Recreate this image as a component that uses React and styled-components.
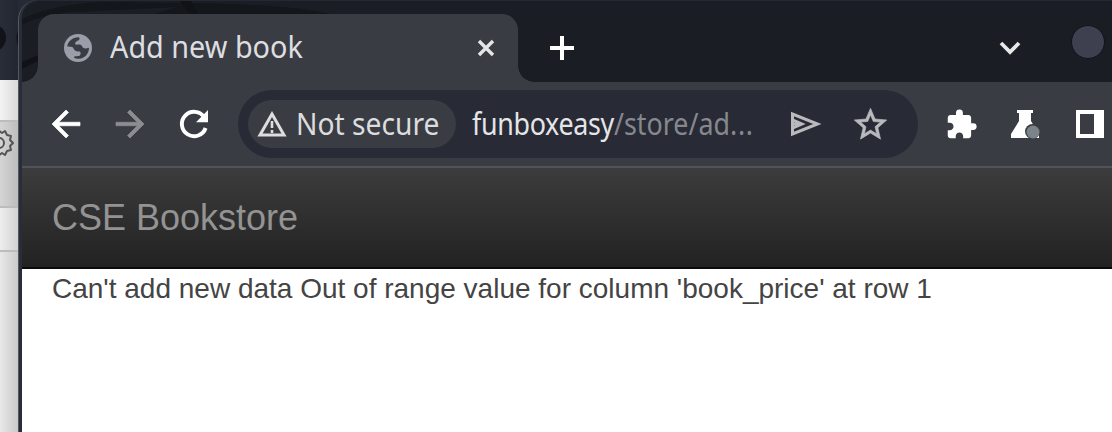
import React from "react";
import styled, { createGlobalStyle } from "styled-components";
import { MdArrowBack, MdArrowForward, MdStarBorder, MdExtension } from "react-icons/md";

const Global = createGlobalStyle`
  * { box-sizing: border-box; }
  body { margin: 0; overflow: hidden; background: #fff; }
  svg { display: block; flex: none; }
  svg path[fill="none"]:not([stroke]) { stroke: none; }
`;
const Desktop = styled.div`
  display: flex; width: 1112px; height: 432px; overflow: hidden;
  background: linear-gradient(#252a34 80px, #f4f4f4 80px);
`;
const BackWindow = styled.aside`
  width: 18px; flex: none; display: flex; flex-direction: column;
`;
const BackTitle = styled.div`
  height: 80px; padding-top: 23px;
  background: linear-gradient(90deg, #292d39, #22262f);
`;
const BackPane = styled.div`
  height: ${p => p.$h}px;
  border-top: ${p => (p.$line ? "2px solid #b9bebc" : "0")};
  background: linear-gradient(90deg, ${p => p.$from}, ${p => p.$to});
  padding-top: ${p => p.$pad || 0}px;
`;
const Frame = styled.div`
  flex: 1; min-width: 0; display: flex; flex-direction: column;
  border-left: 1px solid #535862; border-top-left-radius: 20px;
  background: #292d37; padding-left: 3px; overflow: hidden;
`;
const TabStrip = styled.header`
  position: relative; height: 82px; flex: none; display: flex; align-items: flex-end;
  background: #1a1d24; border-top-left-radius: 18px;
  border-top: 1px solid #242832;
`;
const Backdrop = styled.svg`
  position: absolute; left: 0; top: 0;
`;
const TabFoot = styled.div`
  width: 16px; height: 16px; flex: none; z-index: 1;
  background: radial-gradient(circle at ${p => (p.$right ? "100%" : "0")} 0, transparent 15.5px, #3a3c43 16px);
`;
const Tab = styled.div`
  z-index: 1; width: 480px; height: 68px; flex: none; display: flex; align-items: center;
  border-radius: 16px 16px 0 0; background: #3a3c43; padding: 0 0 1px 26px;
`;
const TabTitle = styled.span`
  width: 385px; padding: 0 0 2px 18px; color: #dddee0; white-space: nowrap;
`;
const Label = styled.span`
  display: inline-block; white-space: nowrap; transform-origin: 0 50%;
  font: 30px/40px "Noto Sans", sans-serif;
  transform: scaleX(${p => p.$fit || 1});
`;
const Strip = styled.div`
  flex: 1; height: 68px; display: flex; align-items: center; justify-content: space-between;
  padding: 0 7px 0 14px;
`;
const StripEnd = styled.div`
  display: flex; align-items: center; gap: 50px;
`;
const WindowDot = styled.i`
  width: 34px; height: 34px; border-radius: 50%; background: #3e4050; border: 1px solid #111318;
  margin-top: -12px;
`;
const Toolbar = styled.nav`
  height: 86px; flex: none; display: flex; align-items: center; padding-left: 23px;
  background: #3a3c43; border-bottom: 2px solid #515359; color: #fff;
`;
const NavButtons = styled.div`
  display: flex; gap: 22px; width: 193px; flex: none;
  svg:nth-child(-n + 2) { stroke: currentColor; stroke-width: 0.4px; }
  svg:nth-child(2) { color: #8c8d91; }
`;
const AddressBar = styled.div`
  width: 680px; height: 68px; flex: none; border-radius: 34px; background: #282a35;
  display: flex; align-items: center; padding-left: 10px;
`;
const SecurityChip = styled.div`
  width: 208px; height: 48px; flex: none; border-radius: 24px; background: #3a3c43; color: #dcdddf;
  display: flex; align-items: center; padding-left: 9px; gap: 9px;
`;
const Url = styled.div`
  width: 334px; flex: none; padding-left: 16px; color: #85888e; white-space: nowrap;
  b { font-weight: 400; color: #e4e5e6; letter-spacing: -0.35px; }
  i { font-style: normal; letter-spacing: 0.8px; }
`;
const UrlActions = styled.div`
  display: flex; align-items: center; gap: 29px; color: #b9babd;
  svg:last-child { stroke: currentColor; stroke-width: 0.4px; }
`;
const Extensions = styled.div`
  display: flex; align-items: center; gap: 32px; padding-left: 27px;
`;
const SiteHeader = styled.div`
  height: 101px; flex: none; padding: 29px 0 0 30px;
  background: linear-gradient(#3c3c3c, #222); border-bottom: 2px solid #0b0b0b;
`;
const Brand = styled.span`
  display: block; color: #939393; white-space: nowrap;
  font: 36px/42px "Liberation Sans", Arial, sans-serif;
`;
const Page = styled.main`
  flex: 1; background: #fff; padding: 2px 0 0 30px;
`;
const Message = styled.p`
  margin: 0; color: #444; white-space: nowrap; width: max-content;
  font: 28px/35px "Liberation Sans", Arial, sans-serif;
`;

const Globe = () => (
  <svg width="28" height="28" viewBox="0 0 28 28">
    <circle cx="14" cy="14" r="14" fill="#9a9ea8" />
    <path d="M3.2 12.5C4 7 9 3 14.5 3.2c2 .8 1 2.6-.8 3.6-2.4 1-3 2.2-2.2 3.7 2 .5 5-.8 6.5 1.5.6 2 2.3 3.4 7 1.8 0 6-4.4 10.7-10.2 11-2 0-3.8-.5-5-1.4.8-2 3.7-.8 5.8-1.7 1.2-1 1.6-2.7.2-4.1-3-.4-5.2-.6-6-2.7-.5-2-3-2.7-6.6-2.4z" fill="#3a3c43" />
  </svg>
);
const Reload = () => (
  <svg width="42" height="42" viewBox="0 0 42 42">
    <path d="M31.2 14.2A12.2 12.2 0 1 0 32.6 25" fill="none" stroke="#fff" strokeWidth="3.9" />
    <path d="M35 7v12.2H23z" fill="#fff" />
  </svg>
);
const Gear = () => (
  <svg width="14" height="30" viewBox="0 0 14 30" fill="none" stroke="#555" strokeWidth="2">
    <path d="M-2 2 2 5l3-2 2 4 4 1-1 4 3 3-3 3 1 4-4 1-2 4-3-2-4 3" strokeLinejoin="round" />
    <circle cx="-1" cy="15" r="5" />
  </svg>
);

export default function App() {
  return (
    <Desktop>
      <Global />
      <BackWindow>
        <BackTitle>
          <svg width="18" height="32"><circle cx="-8" cy="15" r="14" fill="#111318" /><path d="M18 8q-3 7 0 15z" fill="#111318" /></svg>
        </BackTitle>
        <BackPane $h={40} $from="#f3f3f3" $to="#d9d9d9" />
        <BackPane $h={86} $line $from="#d5d5d5" $to="#bdbdbd" $pad={6}><Gear /></BackPane>
        <BackPane $h={44} $line $from="#eee" $to="#d2d2d2" />
        <BackPane $h={182} $line $from="#e8e8e8" $to="#cacaca" />
      </BackWindow>
      <Frame>
        <TabStrip>
          <Backdrop width="330" height="82" viewBox="0 0 330 82" fill="none">
            <path d="M0 18Q40 0 95 1L160 2Q270 3 312 14H130l25-8-105 5Q18 14 0 24z" fill="#13161b" />
            <path d="M158 0l10 14h9L169 0zM0 61l16-7v6L0 68z" fill="#101217" />
          </Backdrop>
          <TabFoot />
          <Tab>
            <Globe />
            <TabTitle><Label $fit={0.96}>Add new book</Label></TabTitle>
            <svg width="18" height="18" viewBox="0 0 18 18" stroke="#e4e5e6" strokeWidth="3.4"><path d="M2 2l14 14M16 2L2 16" /></svg>
          </Tab>
          <TabFoot $right />
          <Strip>
            <svg width="28" height="26" viewBox="0 0 28 26" stroke="#fff" strokeWidth="4"><path d="M2 13h24M14 1v24" /></svg>
            <StripEnd>
              <svg width="22" height="14" viewBox="0 0 22 14" fill="none" stroke="#e8e8e9" strokeWidth="3.8"><path d="M2 2l9 9 9-9" /></svg>
              <WindowDot />
            </StripEnd>
          </Strip>
        </TabStrip>
        <Toolbar>
          <NavButtons><MdArrowBack size={42} /><MdArrowForward size={42} /><Reload /></NavButtons>
          <AddressBar>
            <SecurityChip>
              <svg width="30" height="26" viewBox="0 0 30 26" fill="none" stroke="#dcdddf" strokeWidth="3">
                <path d="M15 3L3 24h24z" /><path d="M15 10v7M15 19v3" strokeWidth="2.6" />
              </svg>
              <Label $fit={0.94}>Not secure</Label>
            </SecurityChip>
            <Url><Label $fit={0.895}><b>funboxeasy</b>/store/ad<i>...</i></Label></Url>
            <UrlActions>
              <svg width="32" height="26" viewBox="0 0 32 26" fill="none" stroke="currentColor" strokeWidth="3"><path d="M2.5 3v20L27.5 13zM3 13h9M3 9l9 4-9 4" /></svg>
              <MdStarBorder size={39} />
            </UrlActions>
          </AddressBar>
          <Extensions>
            <MdExtension size={33} />
            <svg width="30" height="30" viewBox="0 0 30 30">
              <path d="M7 1h16v3h-2v8l8 13v4H1v-4l8-13V4H7z" fill="#fff" />
              <circle cx="22.5" cy="22.5" r="7.5" fill="#3a3c43" /><circle cx="23" cy="23" r="6.5" fill="#7d838b" />
            </svg>
            <svg width="32" height="28" viewBox="-4 0 32 28"><path d="M0 0h28v28H0zM4 4v20h14V4z" fill="#fff" fillRule="evenodd" /></svg>
          </Extensions>
        </Toolbar>
        <SiteHeader><Brand>CSE Bookstore</Brand></SiteHeader>
        <Page><Message>Can't add new data Out of range value for column 'book_price' at row 1</Message></Page>
      </Frame>
    </Desktop>
  );
}
